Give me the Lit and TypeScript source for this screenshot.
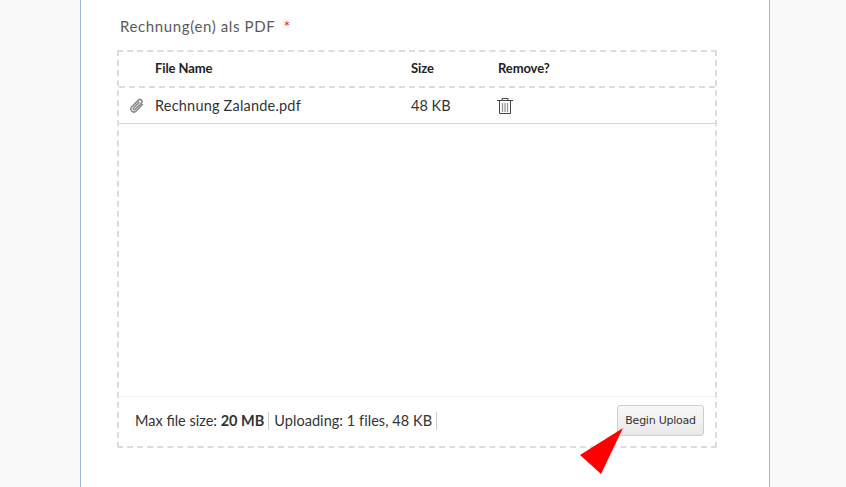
import { LitElement, html, css } from "lit";
import { customElement } from "lit/decorators.js";

@customElement("app-root")
export class AppRoot extends LitElement {
  static styles = css`
    :host {
      display: block;
      height: 487px;
      overflow: hidden;
      background: #f9f9f9;
      font-family: Lato, "Open Sans", sans-serif;
      color: #333;
    }
    .card {
      box-sizing: border-box;
      width: 690px;
      height: 487px;
      margin-left: 80px;
      padding: 16px 52px 0 36px;
      background: #fff;
      border-left: 1px solid #9dbbd6;
      border-right: 1px solid #9dbbd6;
    }
    .label {
      height: 20px;
      margin: 0 0 14px 3px;
      font-size: 15px;
      line-height: 20px;
      color: #5a5a5a;
      letter-spacing: 0.62px;
    }
    .req {
      color: #e02020;
      margin-left: 4px;
      font-size: 16px;
    }
    .zone {
      box-sizing: border-box;
      height: 398px;
      display: flex;
      flex-direction: column;
      border: 2px dashed #dcdcdc;
      border-radius: 2px;
    }
    .row {
      display: grid;
      grid-template-columns: 36px 256px 87px 1fr;
      align-items: center;
    }
    .head {
      box-sizing: border-box;
      height: 36px;
      padding-bottom: 2px;
      border-bottom: 2px dashed #dcdcdc;
      font-size: 13px;
      font-weight: 700;
      color: #222;
      letter-spacing: -0.1px;
    }
    .file {
      box-sizing: border-box;
      height: 36px;
      border-bottom: 1px solid #d5d5d5;
      font-size: 14.5px;
      color: #333;
    }
    .name {
      letter-spacing: 0.2px;
    }
    .clip {
      display: block;
      margin-left: 10px;
    }
    .trash {
      display: block;
      margin-left: -1px;
    }
    .spacer {
      flex: 1;
    }
    .foot {
      box-sizing: border-box;
      height: 50px;
      display: flex;
      align-items: center;
      padding: 0 11px 2px 16px;
      border-top: 1px solid #eee;
      font-size: 14.5px;
      color: #333;
    }
    .stat {
      padding-right: 4px;
      margin-right: 5px;
      border-right: 1px solid #ccc;
      line-height: 18px;
    }
    .up {
      letter-spacing: 0.05px;
    }
    .btn {
      box-sizing: border-box;
      width: 87px;
      height: 31px;
      margin-left: auto;
      padding: 0;
      border: 1px solid #ccc;
      border-radius: 3px;
      background: linear-gradient(#f8f8f8, #e9e9e9);
      font-family: "DejaVu Sans", sans-serif;
      font-size: 11px;
      letter-spacing: -0.25px;
      color: #333;
    }
    .arrow {
      position: absolute;
      left: 579px;
      top: 427px;
    }
  `;

  render() {
    return html`
      <div class="card">
        <div class="label">Rechnung(en) als PDF <span class="req">*</span></div>
        <div class="zone">
          <div class="row head">
            <span></span>
            <span>File Name</span>
            <span>Size</span>
            <span>Remove?</span>
          </div>
          <div class="row file">
            <svg class="clip" width="16" height="16" viewBox="0 0 16 16" fill="none" stroke="#888" stroke-width="1.5" stroke-linecap="round">
              <path d="M13.5 6.5 7.2 13a3 3 0 0 1-4.4-4.2l6.6-6.7a2.1 2.1 0 0 1 3 3L6.2 11.3a1 1 0 0 1-1.5-1.5L10 4.4" />
            </svg>
            <span class="name">Rechnung Zalande.pdf</span>
            <span>48 KB</span>
            <svg class="trash" width="16" height="16" viewBox="0 0 16 16" fill="none" stroke="#444" stroke-width="1">
              <path d="M0 2.5h16M5 2.5V.5h6v2M2.5 2.5v13h11V2.5" />
              <path d="M5.5 5v9M8 5v9M10.5 5v9" stroke="#999" stroke-width="1.3" />
            </svg>
          </div>
          <div class="spacer"></div>
          <div class="foot">
            <span class="stat">Max file size: <b>20 MB</b></span>
            <span class="stat up">Uploading: 1 files, 48 KB</span>
            <button class="btn">Begin Upload</button>
          </div>
        </div>
      </div>
      <svg class="arrow" width="46" height="48" viewBox="0 0 46 48">
        <polygon points="44,1 1,28 22,47" fill="#ff0000" />
      </svg>
    `;
  }
}
